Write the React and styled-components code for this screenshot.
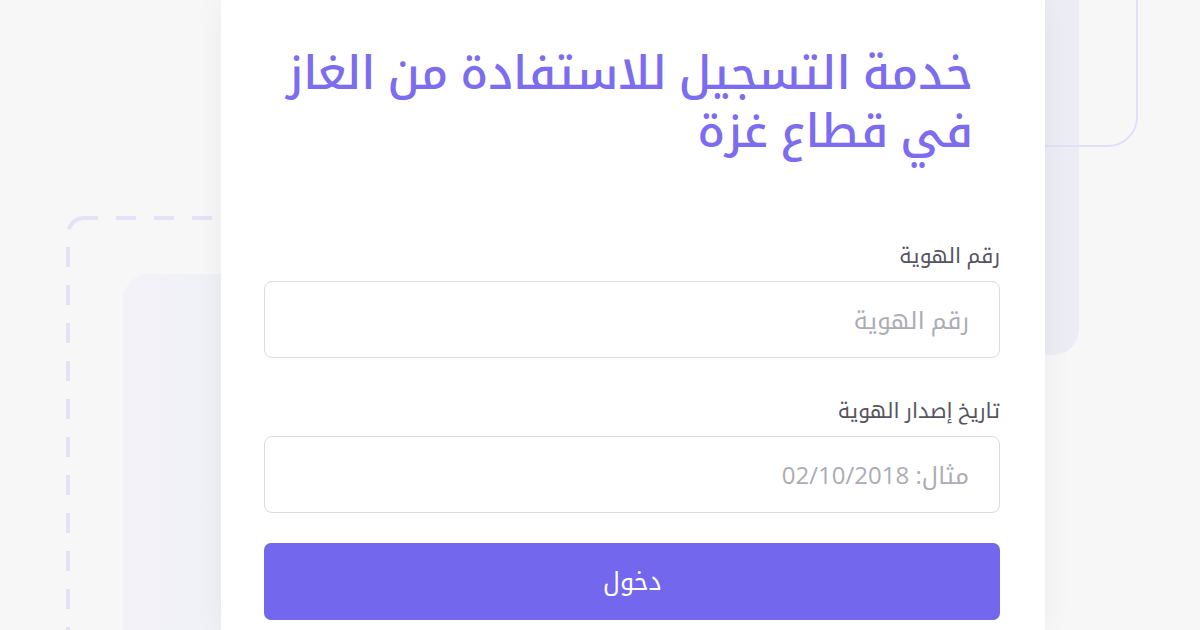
import React from "react";
import styled, { createGlobalStyle } from "styled-components";

const Global = createGlobalStyle`
  html, body {
    margin: 0;
    padding: 0;
    background: #f7f7f7;
  }
  * {
    box-sizing: border-box;
  }
`;

const arabic = `"Open Sans", "Noto Kufi Arabic", "Noto Sans Arabic", "DejaVu Sans", sans-serif`;

const Page = styled.div`
  position: relative;
  width: 1200px;
  height: 630px;
  overflow: hidden;
  background: #f7f7f7;
  display: flex;
  align-items: stretch;
  padding-left: 221px;
  font-family: ${arabic};
`;

// decorative shapes behind the card
const DashedFrame = styled.svg`
  position: absolute;
  left: 66px;
  top: 216px;
`;

const SoftBlock = styled.div`
  position: absolute;
  left: ${(p) => p.left}px;
  top: ${(p) => p.top}px;
  width: ${(p) => p.width}px;
  height: ${(p) => p.height}px;
  border-radius: 26px;
  background: linear-gradient(90deg, #f2f2f8, #ececf5);
`;

const OutlineFrame = styled.div`
  position: absolute;
  left: 800px;
  top: -100px;
  width: 338px;
  height: 247px;
  border: 2px solid #e2dff8;
  border-radius: 30px;
`;

const Card = styled.main`
  position: relative;
  z-index: 1;
  width: 824px;
  background: #ffffff;
  box-shadow: 0 0 28px rgba(0, 0, 0, 0.05);
  padding: 42px 45px 0 43px;
  direction: rtl;
  display: flex;
  flex-direction: column;
`;

const Title = styled.h1`
  margin: 0;
  padding-right: 27px;
  font-size: 46px;
  line-height: 58px;
  font-weight: 500;
  color: #7b6cf0;
  white-space: nowrap;
`;

const Form = styled.form`
  display: flex;
  flex-direction: column;
  margin-top: 86px;
`;

const Field = styled.div`
  display: flex;
  flex-direction: column;
  margin-bottom: ${(p) => p.$gap}px;
`;

const Label = styled.label`
  font-size: 21px;
  line-height: 22px;
  color: #56555f;
  margin-bottom: 15px;
`;

const Input = styled.input`
  direction: rtl;
  height: 77px;
  border: 1px solid #dcdbe4;
  border-radius: 8px;
  padding: 0 30px;
  font-family: ${arabic};
  font-size: 24px;
  color: #333;
  background: #fff;
  outline: none;
  &::placeholder {
    color: #acacb4;
  }
`;

const Submit = styled.button`
  height: 77px;
  border: none;
  border-radius: 7px;
  background: #7367ee;
  color: #fff;
  font-family: ${arabic};
  font-size: 25px;
  cursor: pointer;
`;

export default function App() {
  return (
    <>
      <Global />
      <Page>
        <SoftBlock left={123} top={274} width={300} height={500} />
        <DashedFrame width="400" height="500" viewBox="0 0 400 500">
          <rect
            x="2"
            y="2"
            width="390"
            height="600"
            rx="16"
            fill="none"
            stroke="#e4e2f6"
            strokeWidth="4"
            strokeDasharray="20 18"
            strokeDashoffset="6"
          />
        </DashedFrame>
        <SoftBlock left={880} top={-60} width={199} height={415} />
        <OutlineFrame />
        <Card>
          <Title>
            خدمة التسجيل للاستفادة من الغاز
            <br />
            في قطاع غزة
          </Title>
          <Form onSubmit={(e) => e.preventDefault()}>
            <Field $gap={41}>
              <Label>رقم الهوية</Label>
              <Input placeholder="رقم الهوية" />
            </Field>
            <Field $gap={30}>
              <Label>تاريخ إصدار الهوية</Label>
              <Input placeholder="مثال: 02/10/2018" />
            </Field>
            <Submit type="submit">دخول</Submit>
          </Form>
        </Card>
      </Page>
    </>
  );
}
